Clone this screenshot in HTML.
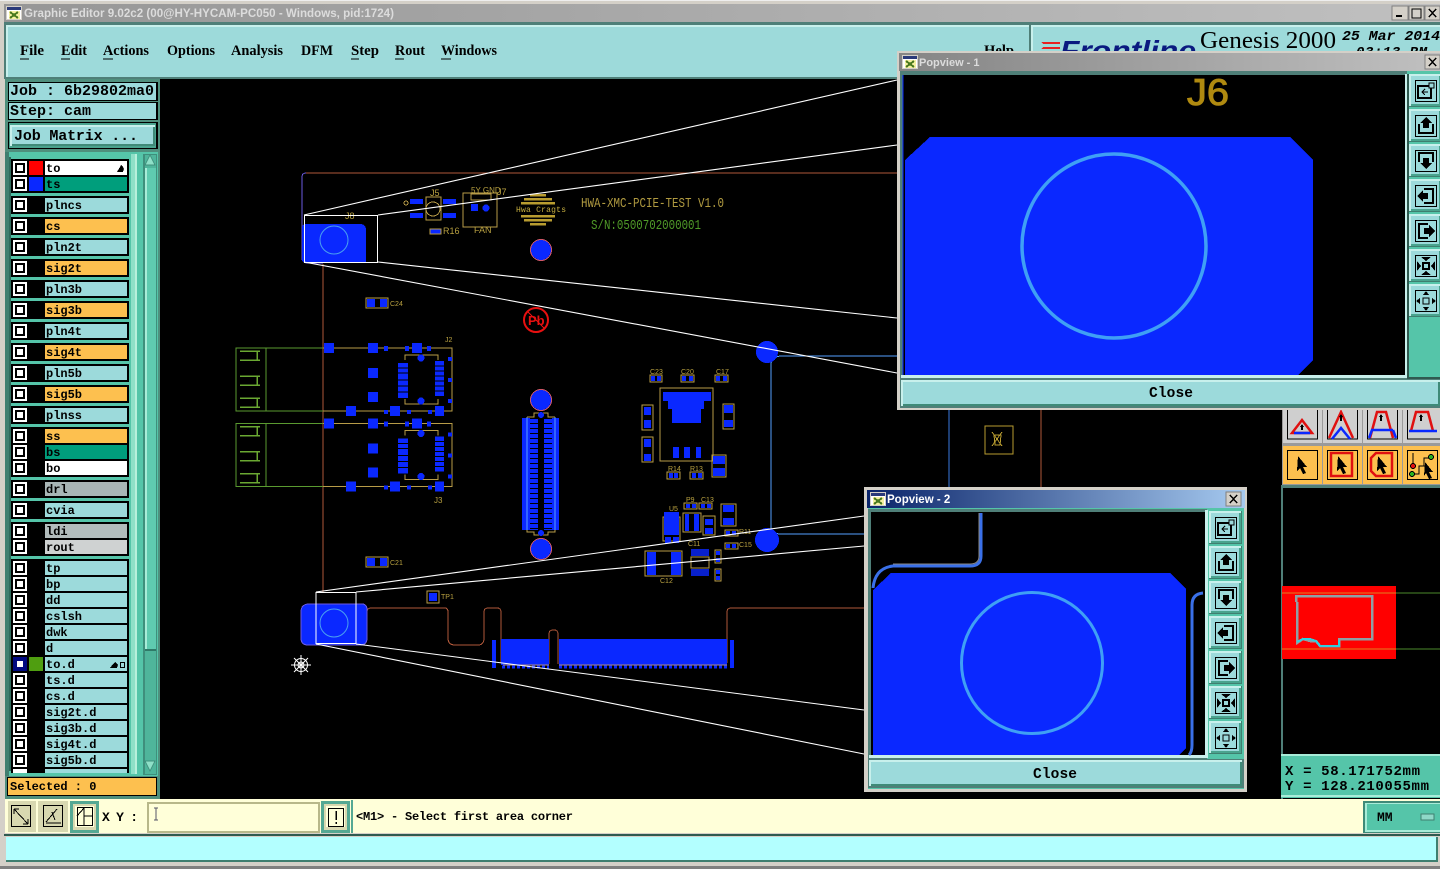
<!DOCTYPE html>
<html><head><meta charset="utf-8"><title>Graphic Editor</title>
<style>
html,body{margin:0;padding:0;background:#000;width:1440px;height:869px;overflow:hidden}
svg{display:block;position:absolute;left:0;top:0}
.m{font:bold 12px "Liberation Mono",monospace;fill:#000}
.j{font:bold 15px "Liberation Mono",monospace;fill:#000}
.n{font:bold 14.5px "Liberation Serif",serif;fill:#000}
.g{font:9px "Liberation Sans",sans-serif;fill:#b8a040}
</style></head><body>
<svg width="1440" height="869" viewBox="0 0 1440 869" xmlns="http://www.w3.org/2000/svg" shape-rendering="crispEdges">
<defs>
<linearGradient id="t0" x1="0" x2="1" y1="0" y2="0"><stop offset="0" stop-color="#969696"/><stop offset="1" stop-color="#c0c0c0"/></linearGradient>
<linearGradient id="t1" x1="0" x2="1" y1="0" y2="0"><stop offset="0" stop-color="#858585"/><stop offset="1" stop-color="#c0c0c0"/></linearGradient>
<linearGradient id="t2" x1="0" x2="1" y1="0" y2="0"><stop offset="0" stop-color="#0a246a"/><stop offset="1" stop-color="#a6caf0"/></linearGradient>
<g id="c"><rect width="14" height="14" fill="#fff"/><rect x="2" y="2" width="10" height="10" fill="#000"/><rect x="4" y="4" width="6" height="6" fill="#fff"/></g>
<g id="w"><rect width="16" height="14" fill="#d4d0c8"/><rect x="1" y="1" width="14" height="12" fill="#fff"/><rect x="1" y="1" width="14" height="3" fill="#2a3a7a"/><rect x="3" y="5" width="11" height="8" fill="#f4f0a0"/><path d="M4 6l8 6M12 6l-8 6" stroke="#4a7a20" stroke-width="2"/></g>
<g id="b"><rect width="33" height="33" fill="#3f7f70"/><rect width="32" height="32" fill="#c8f0ec"/><rect x="2" y="2" width="30" height="30" fill="#4aa38e"/><rect x="2" y="2" width="28" height="28" fill="#9cdadb"/><rect x="6.500" y="6.500" width="21" height="21" fill="none" stroke="#000"/></g>
<g id="i1"><use href="#b"/><rect x="9" y="12" width="13" height="12" fill="none" stroke="#000" stroke-width="2"/><rect x="20" y="9" width="5" height="5" fill="#9cdadb" stroke="#000"/><path d="M19 18h-6m3-3l-3 3 3 3" fill="none" stroke="#000"/></g>
<g id="i2"><use href="#b"/><path d="M10 15v9h14v-9" fill="none" stroke="#000" stroke-width="2"/><path d="M17 8l6 6h-3v5h-6v-5h-3z" fill="#000"/></g>
<g id="i3"><use href="#b"/><path d="M10 18v-9h14v9" fill="none" stroke="#000" stroke-width="2"/><path d="M17 25l6-6h-3v-5h-6v5h-3z" fill="#000"/></g>
<g id="i4"><use href="#b"/><path d="M15 10h9v14h-9" fill="none" stroke="#000" stroke-width="2"/><path d="M8 17l6-6v3h5v6h-5v3z" fill="#000"/></g>
<g id="i5"><use href="#b"/><path d="M19 10h-9v14h9" fill="none" stroke="#000" stroke-width="2"/><path d="M26 17l-6-6v3h-5v6h5v3z" fill="#000"/></g>
<g id="i6"><use href="#b"/><rect x="14" y="14" width="6" height="6" fill="none" stroke="#000" stroke-width="2"/><path d="M12 8h10l-5 4zM12 26h10l-5-4zM8 12v10l4-5zM26 12v10l-4-5z" fill="#000"/></g>
<g id="i7"><use href="#b"/><rect x="14" y="14" width="6" height="6" fill="none" stroke="#000"/><path d="M14 11h6l-3-4zM14 23h6l-3 4zM11 14v6l-4-3zM23 14v6l4-3z" fill="#000"/></g>
<g id="conn">
<rect x="236" y="348" width="30" height="63" fill="none" stroke="#5a9a30"/><path d="M266 348h57M266 411h57" stroke="#5a9a30"/>
<path d="M240 351h20M240 360h20M257 351v9M240 376h20M240 385h20M257 376v9M240 398h20M240 407h20M257 398v9" stroke="#6aa832" stroke-width="1.500" fill="none"/>
<path d="M323 348h129v63h-129" fill="none" stroke="#b89c48"/>
<path d="M405 360v-5h33v5M405 399v5h33v-5" fill="none" stroke="#b89c48"/>
<g fill="#0a28ff"><rect x="324" y="343" width="10" height="10"/><rect x="368" y="343" width="10" height="10"/><rect x="412" y="343" width="10" height="10"/><rect x="384" y="346" width="4" height="5"/><rect x="405" y="346" width="4" height="5"/><rect x="427" y="346" width="4" height="5"/><rect x="368" y="368" width="10" height="10"/><rect x="368" y="392" width="10" height="10"/><rect x="346" y="406" width="10" height="10"/><rect x="390" y="406" width="10" height="10"/><rect x="435" y="406" width="9" height="10"/><rect x="384" y="410" width="4" height="4"/><rect x="407" y="410" width="4" height="4"/><rect x="428" y="410" width="4" height="4"/><rect x="398" y="363" width="10" height="35"/><rect x="435" y="361" width="9" height="35"/><circle cx="421" cy="358" r="3.5"/><circle cx="421" cy="401" r="3.5"/><rect x="448" y="357" width="4" height="4"/><rect x="448" y="378" width="4" height="4"/><rect x="448" y="399" width="4" height="4"/></g>
<path d="M398 368h10M398 373h10M398 380h10M398 386h10M398 392h10M435 366h9M435 371h9M435 376h9M435 381h9M435 386h9M435 391h9" stroke="#000" stroke-width=".7"/>
</g>
</defs>

<!-- window chrome -->
<rect width="1440" height="869" fill="#d4d0c8"/>
<rect x="0" y="0" width="1440" height="1" fill="#eee"/>
<rect x="4" y="4" width="1436" height="18" fill="url(#t0)"/>
<use href="#w" x="6" y="6"/>
<text x="24" y="17" font-family="Liberation Sans" font-weight="bold" font-size="11.5" fill="#dcdcdc" textLength="370" lengthAdjust="spacingAndGlyphs">Graphic Editor 9.02c2 (00@HY-HYCAM-PC050 - Windows, pid:1724)</text>
<g><rect x="1392" y="6" width="16" height="14" fill="#d4d0c8" stroke="#808080"/><path d="M1396 16h6" stroke="#000" stroke-width="2"/><rect x="1409" y="6" width="15" height="14" fill="#d4d0c8" stroke="#808080"/><rect x="1412" y="9" width="9" height="9" fill="none" stroke="#000"/><rect x="1425" y="6" width="15" height="14" fill="#d4d0c8" stroke="#808080"/><path d="M1429 9l7 8M1436 9l-7 8" stroke="#000" stroke-width="1.5"/></g>
<rect x="4" y="22" width="1436" height="57" fill="#4f7f78"/>
<rect x="6" y="25" width="1023" height="52" fill="#c8f0ec"/><rect x="8" y="27" width="1021" height="50" fill="#9ddada"/>
<rect x="1031" y="25" width="409" height="52" fill="#c8f0ec"/><rect x="1033" y="27" width="407" height="50" fill="#9ddada"/>
<text class="n" x="20" y="55" textLength="24" lengthAdjust="spacingAndGlyphs">File</text>
<text class="n" x="61" y="55" textLength="26" lengthAdjust="spacingAndGlyphs">Edit</text>
<text class="n" x="103" y="55" textLength="46" lengthAdjust="spacingAndGlyphs">Actions</text>
<text class="n" x="167" y="55" textLength="48" lengthAdjust="spacingAndGlyphs">Options</text>
<text class="n" x="231" y="55" textLength="52" lengthAdjust="spacingAndGlyphs">Analysis</text>
<text class="n" x="301" y="55" textLength="32" lengthAdjust="spacingAndGlyphs">DFM</text>
<text class="n" x="351" y="55" textLength="28" lengthAdjust="spacingAndGlyphs">Step</text>
<text class="n" x="395" y="55" textLength="30" lengthAdjust="spacingAndGlyphs">Rout</text>
<text class="n" x="441" y="55" textLength="56" lengthAdjust="spacingAndGlyphs">Windows</text>
<text class="n" x="984" y="55" textLength="30" lengthAdjust="spacingAndGlyphs">Help</text>
<path d="M20 59h9M61 59h9M103 59h10M351 59h8M395 59h9M441 59h10" stroke="#000"/>
<path d="M1041 42h19v2h-17zM1043 47h17v2h-19z" fill="#e82020"/>
<text x="1060" y="60" font-family="Liberation Sans" font-weight="bold" font-style="italic" font-size="28" fill="#0a1a80" textLength="136" lengthAdjust="spacingAndGlyphs">Frontline</text>
<text x="1200" y="48" font-family="Liberation Serif" font-size="24" fill="#000" textLength="136" lengthAdjust="spacingAndGlyphs">Genesis 2000</text>
<text x="1342" y="40" font-family="Liberation Mono" font-style="italic" font-weight="bold" font-size="14" fill="#000" textLength="98" lengthAdjust="spacingAndGlyphs">25 Mar 2014</text>
<text x="1356" y="56" font-family="Liberation Mono" font-style="italic" font-weight="bold" font-size="14" fill="#000" textLength="71">03:13 PM</text>

<!-- canvas -->
<rect x="160" y="79" width="1280" height="721" fill="#000"/>

<!-- left panel -->
<rect x="5" y="79" width="155" height="721" fill="#4f8f7d"/>
<rect x="8" y="82" width="150" height="19" fill="#000"/><rect x="9" y="83" width="147" height="17" fill="#9cdadb"/>
<text class="j" x="10" y="95" textLength="144">Job : 6b29802ma0</text>
<rect x="8" y="102" width="150" height="18" fill="#000"/><rect x="9" y="103" width="147" height="16" fill="#9cdadb"/>
<text class="j" x="10" y="115" textLength="81">Step: cam</text>
<rect x="8" y="122" width="150" height="27" fill="#000"/><rect x="9" y="123" width="147" height="25" fill="#4aa38e"/>
<rect x="10" y="125" width="145" height="21" fill="#c8f0ec"/><rect x="12" y="127" width="143" height="19" fill="#3f8a78"/><rect x="12" y="127" width="141" height="17" fill="#9cdadb"/>
<text class="j" x="14" y="140" textLength="124">Job Matrix ...</text>
<rect x="5" y="152" width="153" height="624" fill="#55c5a9"/>
<rect x="5" y="152" width="4" height="624" fill="#3f7f70"/>
<rect x="9" y="157" width="2" height="614" fill="#2f6a5c"/>
<rect x="131" y="154" width="6" height="620" fill="#8fe0c8"/><rect x="135" y="154" width="2" height="620" fill="#b8f0dc"/>
<rect x="143" y="154" width="14" height="621" fill="#3f8f7c"/><rect x="145" y="155" width="11" height="619" fill="#4fb59b"/>
<rect x="145" y="168" width="11" height="482" fill="#5fcbb0"/><rect x="145" y="168" width="2" height="482" fill="#a8ecd8"/><rect x="145" y="649" width="11" height="2" fill="#2f7a68"/>
<path d="M145 165l5-10 5 10z" fill="#8fe0c8" stroke="#3f8f7c"/><path d="M145 761l5 10 5-10z" fill="#8fe0c8" stroke="#3f8f7c"/>
<g fill="#000"><rect x="11" y="159" width="118" height="34"/><rect x="11" y="196" width="118" height="18"/><rect x="11" y="217" width="118" height="18"/><rect x="11" y="238" width="118" height="18"/><rect x="11" y="259" width="118" height="18"/><rect x="11" y="280" width="118" height="18"/><rect x="11" y="301" width="118" height="18"/><rect x="11" y="322" width="118" height="18"/><rect x="11" y="343" width="118" height="18"/><rect x="11" y="364" width="118" height="18"/><rect x="11" y="385" width="118" height="18"/><rect x="11" y="406" width="118" height="18"/><rect x="11" y="427" width="118" height="50"/><rect x="11" y="480" width="118" height="18"/><rect x="11" y="501" width="118" height="18"/><rect x="11" y="522" width="118" height="34"/><rect x="11" y="559" width="118" height="214"/></g>
<g fill="#9cdadb">
<rect x="45" y="161" width="82" height="14" fill="#fff"/><rect x="45" y="177" width="82" height="14" fill="#009e7c"/>
<rect x="45" y="198" width="82" height="14"/><rect x="45" y="219" width="82" height="14" fill="#fdc04f"/><rect x="45" y="240" width="82" height="14"/><rect x="45" y="261" width="82" height="14" fill="#fdc04f"/><rect x="45" y="282" width="82" height="14"/><rect x="45" y="303" width="82" height="14" fill="#fdc04f"/><rect x="45" y="324" width="82" height="14"/><rect x="45" y="345" width="82" height="14" fill="#fdc04f"/><rect x="45" y="366" width="82" height="14"/><rect x="45" y="387" width="82" height="14" fill="#fdc04f"/><rect x="45" y="408" width="82" height="14"/>
<rect x="45" y="429" width="82" height="14" fill="#fdc04f"/><rect x="45" y="445" width="82" height="14" fill="#009e7c"/><rect x="45" y="461" width="82" height="14" fill="#fff"/>
<rect x="45" y="482" width="82" height="14" fill="#a8b6b6"/><rect x="45" y="503" width="82" height="14"/><rect x="45" y="524" width="82" height="14" fill="#b2bcbc"/><rect x="45" y="540" width="82" height="14" fill="#cfd2d2"/>
<rect x="45" y="561" width="82" height="14"/><rect x="45" y="577" width="82" height="14"/><rect x="45" y="593" width="82" height="14"/><rect x="45" y="609" width="82" height="14"/><rect x="45" y="625" width="82" height="14"/><rect x="45" y="641" width="82" height="14"/><rect x="45" y="657" width="82" height="14"/><rect x="45" y="673" width="82" height="14"/><rect x="45" y="689" width="82" height="14"/><rect x="45" y="705" width="82" height="14"/><rect x="45" y="721" width="82" height="14"/><rect x="45" y="737" width="82" height="14"/><rect x="45" y="753" width="82" height="14"/><rect x="45" y="769" width="82" height="4"/><rect x="13" y="769" width="14" height="4" fill="#fff"/>
</g>
<rect x="29" y="161" width="14" height="14" fill="#f00"/><rect x="29" y="177" width="14" height="14" fill="#0a28ff"/><rect x="29" y="657" width="14" height="14" fill="#4f9e10"/>
<use href="#c" x="13" y="161"/><use href="#c" x="13" y="177"/><use href="#c" x="13" y="198"/><use href="#c" x="13" y="219"/><use href="#c" x="13" y="240"/><use href="#c" x="13" y="261"/><use href="#c" x="13" y="282"/><use href="#c" x="13" y="303"/><use href="#c" x="13" y="324"/><use href="#c" x="13" y="345"/><use href="#c" x="13" y="366"/><use href="#c" x="13" y="387"/><use href="#c" x="13" y="408"/><use href="#c" x="13" y="429"/><use href="#c" x="13" y="445"/><use href="#c" x="13" y="461"/><use href="#c" x="13" y="482"/><use href="#c" x="13" y="503"/><use href="#c" x="13" y="524"/><use href="#c" x="13" y="540"/><use href="#c" x="13" y="561"/><use href="#c" x="13" y="577"/><use href="#c" x="13" y="593"/><use href="#c" x="13" y="609"/><use href="#c" x="13" y="625"/><use href="#c" x="13" y="641"/>
<rect x="13" y="657" width="14" height="14" fill="#000a80"/><rect x="17" y="661" width="6" height="6" fill="#fff"/>
<use href="#c" x="13" y="673"/><use href="#c" x="13" y="689"/><use href="#c" x="13" y="705"/><use href="#c" x="13" y="721"/><use href="#c" x="13" y="737"/><use href="#c" x="13" y="753"/>
<text class="m" x="46" y="172">to</text><text class="m" x="46" y="188">ts</text><text class="m" x="46" y="209">plncs</text><text class="m" x="46" y="230">cs</text><text class="m" x="46" y="251">pln2t</text><text class="m" x="46" y="272">sig2t</text><text class="m" x="46" y="293">pln3b</text><text class="m" x="46" y="314">sig3b</text><text class="m" x="46" y="335">pln4t</text><text class="m" x="46" y="356">sig4t</text><text class="m" x="46" y="377">pln5b</text><text class="m" x="46" y="398">sig5b</text><text class="m" x="46" y="419">plnss</text><text class="m" x="46" y="440">ss</text><text class="m" x="46" y="456">bs</text><text class="m" x="46" y="472">bo</text><text class="m" x="46" y="493">drl</text><text class="m" x="46" y="514">cvia</text><text class="m" x="46" y="535">ldi</text><text class="m" x="46" y="551">rout</text><text class="m" x="46" y="572">tp</text><text class="m" x="46" y="588">bp</text><text class="m" x="46" y="604">dd</text><text class="m" x="46" y="620">cslsh</text><text class="m" x="46" y="636">dwk</text><text class="m" x="46" y="652">d</text><text class="m" x="46" y="668">to.d</text><text class="m" x="46" y="684">ts.d</text><text class="m" x="46" y="700">cs.d</text><text class="m" x="46" y="716">sig2t.d</text><text class="m" x="46" y="732">sig3b.d</text><text class="m" x="46" y="748">sig4t.d</text><text class="m" x="46" y="764">sig5b.d</text>
<path d="M117 172l3-5 1-2 2 2 1 2-1 3z" fill="#000"/><path d="M110 668l3-4 2-2 2 2 1 1-1 3z" fill="#000"/><rect x="120.500" y="662.500" width="4" height="5" fill="none" stroke="#000"/>
<rect x="7" y="777" width="150" height="19" fill="#000"/><rect x="8" y="778" width="148" height="17" fill="#fdc04f"/>
<text class="m" x="10" y="790">Selected : 0</text>

<!-- board -->
<g fill="none" stroke="#b0583a">
<path d="M306 173H897"/><path d="M323 264V592"/>
<path d="M367 640V612q0-4 4-4H445q3 0 3 4V638q0 7 7 7H478q6 0 6-7V612q0-4 4-4h9q4 0 4 4V663" />
<path d="M727 663V612q0-4 4-4H865"/><path d="M549 664V634q0-4 4-4h1q4 0 4 4V664" />
<path d="M949 410V487" stroke="#3a7ae0"/><path d="M1041 410V487"/>
</g>
<path d="M306 173q-4 0-4 4V258q0 4 4 5H323" fill="none" stroke="#6a5ae0"/>
<path d="M771 528V365q0-9 11-9H897M771 528q0 6 11 6H864" fill="none" stroke="#55a0ff"/>
<path d="M302 228q0-4 4-4H360q6 0 6 6V263H306q-4 0-4-4z" fill="#0a28ff"/><circle cx="334" cy="240" r="14" fill="none" stroke="#4aa0f0" shape-rendering="auto"/>
<path d="M301 612q0-8 8-8H362q5 0 5 6V638q0 7-7 7H308q-7 0-7-7z" fill="#0a28ff" stroke="#6a5ae0"/><circle cx="334" cy="623" r="14" fill="none" stroke="#4aa0f0" shape-rendering="auto"/>
<path d="M501 639h48v26H501zM559 639h168v26H559z" fill="#0a28ff"/><path d="M492 640h4v28h-4zM730 640h4v28h-4z" fill="#0a28ff"/>
<path d="M502 667H549M559 667H727" stroke="#0a28ff" stroke-width="3" stroke-dasharray="3 2"/>
<path d="M503 665H549M559 665H727" stroke="#b08a80"/>
<g fill="#0a28ff"><circle cx="541" cy="250" r="10"/><circle cx="541" cy="400" r="10"/><circle cx="541" cy="549" r="10"/><circle cx="767" cy="352" r="11"/><circle cx="767" cy="540" r="12"/></g>
<g fill="none" stroke="#d05868"><circle cx="541" cy="250" r="10.500"/><circle cx="541" cy="400" r="10.500"/><circle cx="541" cy="549" r="10.500"/></g>
<!-- top parts -->
<rect x="410" y="199" width="13" height="5" fill="#0a28ff"/><rect x="410" y="213" width="13" height="5" fill="#0a28ff"/><rect x="443" y="199" width="13" height="5" fill="#0a28ff"/><rect x="443" y="213" width="13" height="5" fill="#0a28ff"/>
<rect x="426" y="197" width="15" height="23" fill="none" stroke="#b89c48"/><circle cx="433" cy="209" r="7" fill="none" stroke="#b89c48"/><circle cx="406" cy="203" r="2" fill="none" stroke="#b89c48"/>
<rect x="463" y="193" width="34" height="34" fill="none" stroke="#b89c48"/><rect x="471" y="194" width="20" height="6" fill="none" stroke="#b89c48"/><rect x="471" y="204" width="7" height="7" fill="#0a28ff"/><circle cx="486" cy="208" r="3.500" fill="#0a28ff"/>
<text class="g" x="471" y="193" style="font-size:8px">5Y GND</text><text class="g" x="497" y="195">J7</text><text class="g" x="430" y="196">J5</text><text class="g" x="345" y="219">J8</text><text class="g" x="474" y="233">FAN</text><text class="g" x="443" y="234">R16</text>
<rect x="430" y="229" width="11" height="5" fill="#0a28ff" stroke="#b89c48"/>
<g fill="none" stroke="#b89c30" stroke-width="2.500"><path d="M530 195h16M524 199h28M521 203h34M521 216h34M524 220h28M530 224h16"/></g>
<text x="516" y="212" font-family="Liberation Mono" font-size="8" fill="#c8b040" textLength="50">Hwa Cragts</text>
<text x="581" y="207" font-family="Liberation Mono" font-size="14" fill="#b09a40" textLength="143" lengthAdjust="spacingAndGlyphs">HWA-XMC-PCIE-TEST V1.0</text>
<text x="591" y="229" font-family="Liberation Mono" font-size="14" fill="#4f9a28" textLength="110" lengthAdjust="spacingAndGlyphs">S/N:0500702000001</text>
<circle cx="536" cy="320" r="12" fill="none" stroke="#e81010" stroke-width="2" shape-rendering="auto"/><text x="528" y="325" font-family="Liberation Sans" font-weight="bold" font-size="13" fill="#e81010">Pb</text><path d="M528 312l17 17" stroke="#e81010"/>
<rect x="366" y="298" width="22" height="10" fill="none" stroke="#b89c48"/><rect x="367" y="299" width="8" height="8" fill="#0a28ff"/><rect x="380" y="299" width="7" height="8" fill="#0a28ff"/><text class="g" x="390" y="306" style="font-size:7px">C24</text>
<rect x="366" y="557" width="22" height="10" fill="none" stroke="#b89c48"/><rect x="367" y="558" width="8" height="8" fill="#0a28ff"/><rect x="380" y="558" width="7" height="8" fill="#0a28ff"/><text class="g" x="390" y="565" style="font-size:7px">C21</text>
<rect x="427" y="591" width="12" height="12" fill="none" stroke="#b89c48"/><rect x="429" y="593" width="8" height="8" fill="#0a28ff"/><text class="g" x="441" y="599" style="font-size:7px">TP1</text>
<use href="#conn"/><use href="#conn" y="75.500"/>
<text class="g" x="445" y="342" style="font-size:7px">J2</text><text class="g" x="434" y="503" style="font-size:8px">J3</text>
<!-- center connector -->
<rect x="522" y="418" width="16" height="112" fill="#0a28ff"/><rect x="544" y="418" width="15" height="112" fill="#0a28ff"/>
<path d="M534 418V530M548 418V530" stroke="#000" stroke-width="8" stroke-dasharray="1 4"/>
<path d="M527 417V530M555 417V530" stroke="#5aa0ff"/>
<path d="M527 417h7v-4h14v4h7M527 530v2h7v3h14v-3h7v-2" fill="none" stroke="#b89c48"/>
<circle cx="541" cy="415" r="3" fill="#0a28ff"/><circle cx="541" cy="533" r="3" fill="#0a28ff"/>
<!-- power section -->
<g fill="none" stroke="#b89c48">
<rect x="660" y="388" width="53" height="73"/><rect x="650" y="375" width="12" height="7"/><rect x="681" y="375" width="13" height="7"/><rect x="715" y="375" width="13" height="7"/><rect x="642" y="405" width="11" height="25"/><rect x="642" y="437" width="11" height="25"/><rect x="723" y="404" width="11" height="25"/><rect x="712" y="455" width="14" height="22"/><rect x="667" y="472" width="13" height="7"/><rect x="690" y="472" width="13" height="7"/><rect x="684" y="503" width="13" height="6"/><rect x="699" y="503" width="13" height="6"/><rect x="683" y="513" width="18" height="19"/><rect x="703" y="516" width="12" height="19"/><rect x="721" y="504" width="15" height="22"/><rect x="663" y="517" width="17" height="24"/><rect x="645" y="551" width="37" height="25"/><rect x="691" y="557" width="18" height="11"/><rect x="725" y="530" width="13" height="6"/><rect x="725" y="543" width="13" height="6"/><rect x="715" y="550" width="6" height="13"/><rect x="715" y="569" width="6" height="12"/></g>
<g fill="#0a28ff"><rect x="663" y="392" width="48" height="9"/><path d="M668 401h36v8h-3v14h-29v-14h-4z"/><rect x="673" y="447" width="6" height="11"/><rect x="684" y="447" width="6" height="11"/><rect x="696" y="447" width="5" height="11"/><rect x="651" y="376" width="4" height="5"/><rect x="657" y="376" width="4" height="5"/><rect x="682" y="376" width="4" height="5"/><rect x="689" y="376" width="4" height="5"/><rect x="716" y="376" width="4" height="5"/><rect x="723" y="376" width="4" height="5"/><rect x="644" y="407" width="7" height="8"/><rect x="644" y="420" width="7" height="8"/><rect x="644" y="439" width="7" height="8"/><rect x="644" y="454" width="7" height="7"/><rect x="724" y="405" width="9" height="8"/><rect x="724" y="420" width="9" height="7"/><rect x="713" y="456" width="12" height="8"/><rect x="713" y="468" width="12" height="8"/><rect x="669" y="473" width="4" height="5"/><rect x="674" y="473" width="4" height="5"/><rect x="692" y="473" width="4" height="5"/><rect x="698" y="473" width="4" height="5"/><rect x="664" y="512" width="15" height="23"/><rect x="665" y="537" width="6" height="6"/><rect x="673" y="537" width="6" height="6"/><rect x="685" y="514" width="4" height="17"/><rect x="694" y="514" width="5" height="17"/><rect x="705" y="519" width="8" height="6"/><rect x="705" y="528" width="8" height="6"/><rect x="723" y="505" width="11" height="7"/><rect x="723" y="518" width="11" height="7"/><rect x="647" y="552" width="9" height="23"/><rect x="671" y="552" width="10" height="23"/><rect x="691" y="549" width="18" height="7" opacity=".8"/><rect x="691" y="569" width="18" height="7" opacity=".8"/><rect x="726" y="531" width="4" height="4"/><rect x="732" y="531" width="4" height="4"/><rect x="726" y="544" width="4" height="4"/><rect x="732" y="544" width="4" height="4"/><rect x="716" y="551" width="4" height="4"/><rect x="716" y="558" width="4" height="4"/><rect x="716" y="570" width="4" height="4"/><rect x="716" y="576" width="4" height="4"/><rect x="686" y="504" width="4" height="4"/><rect x="692" y="504" width="4" height="4"/><rect x="701" y="504" width="4" height="4"/><rect x="707" y="504" width="4" height="4"/></g>
<g fill="#b8a040" font-family="Liberation Sans" font-size="7">
<text x="650" y="374">C23</text><text x="681" y="374">C20</text><text x="716" y="374">C17</text><text x="668" y="471">R14</text><text x="690" y="471">R13</text><text x="686" y="502">P9</text><text x="701" y="502">C13</text><text x="669" y="511">U5</text><text x="688" y="546">C11</text><text x="739" y="534">R11</text><text x="739" y="547">C15</text><text x="660" y="583">C12</text></g>
<!-- white zoom lines -->
<g fill="none" stroke="#fff" shape-rendering="auto" stroke-width="1.100">
<path d="M304 215L897 80M378 215L897 145M378 262L897 318M304 262L897 373M316 592L864 516M356 592L864 546M356 644L864 710M316 644L864 754"/>
</g>
<rect x="304.500" y="215.500" width="73" height="47" fill="none" stroke="#fff"/><rect x="316" y="592.500" width="40" height="51" fill="none" stroke="#fff"/>
<g fill="none" stroke="#fff" shape-rendering="auto"><circle cx="301" cy="665" r="6.500"/><circle cx="301" cy="665" r="3"/><path d="M301 655v20M291 665h20M294 658l14 14M308 658l-14 14"/></g>
<rect x="985" y="426" width="28" height="28" fill="none" stroke="#b89c30"/><path d="M992 432l10 14M1002 432l-10 14M994 435h7l-1 10h-5z" fill="none" stroke="#b89c30"/>

<!-- right tool icons -->
<rect x="1282" y="410" width="158" height="78" fill="#9a9a9a"/>
<g fill="#cfcfcf"><rect x="1283" y="410" width="39" height="33"/><rect x="1323" y="410" width="39" height="33"/><rect x="1363" y="410" width="39" height="33"/><rect x="1403" y="410" width="37" height="33"/></g>
<g fill="#fdc04f"><rect x="1283" y="446" width="39" height="38"/><rect x="1323" y="446" width="39" height="38"/><rect x="1363" y="446" width="39" height="38"/><rect x="1403" y="446" width="37" height="38"/></g>
<g fill="none" stroke="#000"><path d="M1287.500 410v29h30v-29M1327.500 410v29h30v-29M1367.500 410v29h30v-29M1407.500 410v29h33"/><rect x="1287.500" y="450.500" width="30" height="29"/><rect x="1327.500" y="450.500" width="30" height="29"/><rect x="1367.500" y="450.500" width="30" height="29"/><rect x="1407.500" y="450.500" width="30" height="29"/></g>
<g fill="none" stroke="#e01010" stroke-width="2.500" shape-rendering="auto"><path d="M1292 433l10-13 10 13zM1329 438l12-26 12 26M1370 438l7-26h9l7 26M1411 431l5-19h12l5 19"/><rect x="1331" y="453" width="21" height="23"/><path d="M1376 453h16v23h-16l-5-5v-13z"/></g>
<g fill="none" stroke="#0a28ff" stroke-width="2.500" shape-rendering="auto"><path d="M1294 433h16M1332 439l9-11 9 11M1371 430h22M1369 438l3-8M1393 430l3 8M1409 431h28"/></g>
<path d="M1302 424l-2 3h1v3h2v-3h1zM1341 414l-2 3h1v4h2v-4h1zM1381 414l-2 3h1v4h2v-4h1zM1421 414l-2 3h1v4h2v-4h1z" fill="#000"/>
<path d="M1298 456l9 11-4 0 3 6-3 1-3-6-3 3zM1338 456l9 11-4 0 3 6-3 1-3-6-3 3zM1378 456l9 11-4 0 3 6-3 1-3-6-3 3zM1425 462l8 10-4 0 3 6-3 1-3-6-2 3z" fill="#000"/>
<path d="M1413 453v12M1413 474h6v-8h5v-8h6" fill="none" stroke="#000"/><circle cx="1413" cy="466" r="2.500" fill="#e01010" stroke="#000"/><circle cx="1412" cy="474" r="2.500" fill="#2ab020" stroke="#000"/><circle cx="1431" cy="457" r="2.500" fill="#2ab020" stroke="#000"/>
<rect x="1281" y="485" width="159" height="3" fill="#4f7f78"/>
<rect x="1281" y="488" width="159" height="266" fill="#000"/><rect x="1281" y="488" width="2" height="312" fill="#4f7f78"/>
<rect x="1282" y="586" width="114" height="73" fill="#f00"/>
<path d="M1282 593H1396M1282 649H1396" stroke="#e08020"/><path d="M1396 593H1440M1396 649H1440" stroke="#4d8a2d"/>
<path d="M1296 602V596H1372V639H1339V646H1320L1316 641H1310L1303 639L1297 643V602" fill="none" stroke="#8fa0a4" stroke-width="2.500"/>
<path d="M1297 642L1303 639H1310L1316 641L1320 646H1339V640" fill="none" stroke="#30d0e0" stroke-width="2"/>
<rect x="1281" y="754" width="159" height="44" fill="#55c5a9"/><rect x="1281" y="754" width="159" height="2" fill="#a8ecd8"/><rect x="1281" y="795" width="159" height="2" fill="#a8ecd8"/>
<text x="1285" y="775" font-family="Liberation Mono" font-weight="bold" font-size="14" textLength="135">X = 58.171752mm</text>
<text x="1285" y="790" font-family="Liberation Mono" font-weight="bold" font-size="14" textLength="144">Y = 128.210055mm</text>

<!-- status bar -->
<rect x="5" y="799" width="1435" height="35" fill="#ffffd9"/>
<rect x="8" y="801" width="28" height="31" fill="#d8d8b0"/><rect x="38" y="801" width="30" height="31" fill="#d8d8b0"/><rect x="70" y="801" width="29" height="32" fill="#55a893"/><rect x="73" y="804" width="23" height="26" fill="#d8d8b0"/><rect x="75" y="806" width="19" height="21" fill="#ffffd9"/>
<g fill="none" stroke="#000"><rect x="11.500" y="805.500" width="19" height="21"/><path d="M14 809l14 15M14 809h5M14 809v5M28 824h-5M28 824v-5"/><rect x="43.500" y="805.500" width="19" height="21"/><path d="M46 822l11-13M46 823h15M52 812l3 8"/><rect x="77.500" y="807.500" width="15" height="18"/><path d="M84 808v18M84 816h9M77 816l7-8"/></g>
<text class="m" x="102" y="821" style="font-size:13px" textLength="36">X Y :</text>
<rect x="148" y="803" width="171" height="29" fill="#ffffd9" stroke="#b8b88a" stroke-width="2"/><path d="M154 808h4M156 808v12M154 820h4" stroke="#556" />
<rect x="321" y="801" width="29" height="32" fill="#55a893"/><rect x="324" y="804" width="23" height="26" fill="#d8d8b0"/><rect x="326" y="806" width="19" height="21" fill="#ffffd9"/><rect x="328.500" y="808.500" width="15" height="18" fill="none" stroke="#000"/><path d="M336 811v9M336 822v2" stroke="#000" stroke-width="1.500"/>
<rect x="351" y="800" width="2" height="33" fill="#55a893"/>
<text class="m" x="356" y="820" textLength="217">&lt;M1&gt; - Select first area corner</text>
<rect x="1363" y="801" width="77" height="32" fill="#3f8a78"/><rect x="1365" y="803" width="75" height="29" fill="#a8ecd8"/><rect x="1367" y="804" width="73" height="26" fill="#55c5a9"/>
<text class="m" x="1377" y="821" style="font-size:13px">MM</text><rect x="1421" y="814" width="13" height="6" fill="#8fd8c8" stroke="#3f7f70"/>
<rect x="0" y="833" width="1440" height="36" fill="#d4d0c8"/>
<rect x="4" y="834" width="1436" height="2" fill="#2f5a50"/>
<rect x="6" y="837" width="1432" height="25" fill="#3f7f70"/><rect x="6" y="837" width="1430" height="23" fill="#b3ffff"/>
<rect x="0" y="866" width="1440" height="3" fill="#808080"/>

<!-- Popview 1 -->
<rect x="897" y="51" width="543" height="359" fill="#d4d0c8"/>
<rect x="899" y="53" width="541" height="18" fill="url(#t1)"/>
<use href="#w" x="902" y="55"/>
<text x="919" y="66" font-family="Liberation Sans" font-weight="bold" font-size="11" fill="#dcdcdc">Popview - 1</text>
<rect x="1425" y="55" width="15" height="14" fill="#d4d0c8" stroke="#808080"/><path d="M1429 58l7 8M1436 58l-7 8" stroke="#000" stroke-width="1.500"/>
<rect x="900" y="71" width="540" height="337" fill="#55c5a9"/>
<rect x="900" y="71" width="507" height="308" fill="#4f7f78"/>
<rect x="903" y="75" width="502" height="300" fill="#000"/>
<rect x="1405" y="74" width="2" height="303" fill="#c8f0ec"/><rect x="901" y="375" width="506" height="3" fill="#c8f0ec"/>
<path d="M903 75V375" stroke="#0a28ff"/>
<path d="M905 160L930 137H1290L1313 160V360L1298 375H905Z" fill="#0a28ff"/>
<circle cx="1114" cy="246" r="92" fill="none" stroke="#3fa0f5" stroke-width="3.500" shape-rendering="auto"/>
<text x="1187" y="105" font-family="Liberation Sans" font-size="37" fill="#b08a10" stroke="#b08a10" stroke-width="1" textLength="42" lengthAdjust="spacingAndGlyphs">J6</text>
<rect x="1407" y="74" width="33" height="305" fill="#55c5a9"/><rect x="1407" y="74" width="2" height="305" fill="#2f5a50"/>
<use href="#i1" x="1409" y="74"/><use href="#i2" x="1409" y="109"/><use href="#i3" x="1409" y="144"/><use href="#i4" x="1409" y="179"/><use href="#i5" x="1409" y="214"/><use href="#i6" x="1409" y="249"/><use href="#i7" x="1409" y="284"/>
<rect x="1407" y="377" width="33" height="2" fill="#2f5a50"/>
<rect x="900" y="379" width="540" height="29" fill="#4f7f78"/>
<rect x="901" y="380" width="539" height="26" fill="#c8f0ec"/><rect x="903" y="382" width="537" height="24" fill="#3f8a78"/><rect x="903" y="382" width="535" height="22" fill="#9cdadb"/>
<text x="1149" y="397" font-family="Liberation Mono" font-weight="bold" font-size="14.500" fill="#000" textLength="44">Close</text>

<!-- Popview 2 -->
<rect x="864" y="487" width="383" height="305" fill="#d4d0c8"/>
<rect x="867" y="490" width="378" height="18" fill="url(#t2)"/>
<use href="#w" x="870" y="492"/>
<text x="887" y="503" font-family="Liberation Sans" font-weight="bold" font-size="11.500" fill="#fff">Popview - 2</text>
<rect x="1226" y="492" width="15" height="14" fill="#d4d0c8" stroke="#808080"/><path d="M1230 495l7 8M1237 495l-7 8" stroke="#000" stroke-width="1.500"/>
<rect x="868" y="508" width="376" height="281" fill="#55c5a9"/>
<rect x="868" y="509" width="339" height="250" fill="#4f7f78"/>
<rect x="871" y="512" width="335" height="243" fill="#000"/>
<rect x="1205" y="510" width="3" height="248" fill="#c8f0ec"/><rect x="869" y="755" width="339" height="3" fill="#c8f0ec"/>
<path d="M873 590V755H876L1179 755L1186 748V589L1170 573H891Z" fill="#0a28ff"/>
<circle cx="1032" cy="663" r="70.500" fill="none" stroke="#3fa0f5" stroke-width="3" shape-rendering="auto"/>
<g fill="none" shape-rendering="auto"><path d="M981 513V556Q981 566 970 566H893Q875 568 873 588" stroke="#3a70e8" stroke-width="3"/><path d="M1203 593Q1192 594 1192 605V745Q1192 752 1189 755" stroke="#3a70e8" stroke-width="3"/><path d="M979 513V556Q979 564 970 564H893" stroke="#888" stroke-width="1"/></g>
<rect x="1208" y="510" width="36" height="249" fill="#55c5a9"/>
<use href="#i1" x="1209" y="511"/><use href="#i2" x="1209" y="546"/><use href="#i3" x="1209" y="581"/><use href="#i4" x="1209" y="616"/><use href="#i5" x="1209" y="651"/><use href="#i6" x="1209" y="686"/><use href="#i7" x="1209" y="721"/>
<rect x="868" y="759" width="376" height="29" fill="#4f7f78"/>
<rect x="869" y="760" width="373" height="26" fill="#c8f0ec"/><rect x="871" y="762" width="371" height="24" fill="#3f8a78"/><rect x="871" y="762" width="369" height="22" fill="#9cdadb"/>
<text x="1033" y="778" font-family="Liberation Mono" font-weight="bold" font-size="14.500" fill="#000" textLength="44">Close</text>
</svg>
</body></html>
